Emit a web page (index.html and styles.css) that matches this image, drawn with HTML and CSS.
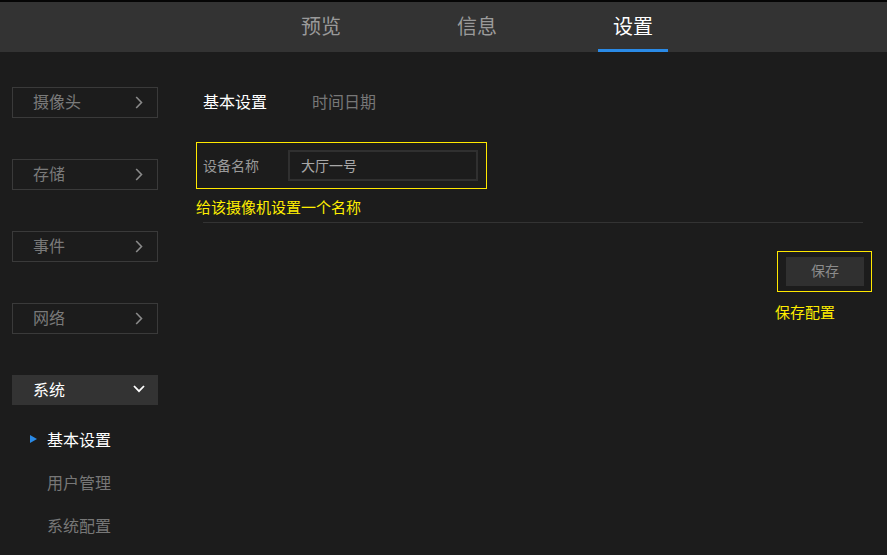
FILE: index.html
```html
<!DOCTYPE html>
<html lang="zh-CN">
<head>
<meta charset="utf-8">
<title>设置</title>
<link rel="stylesheet" href="styles.css">
</head>
<body>
<header class="topbar">
  <nav class="top-tabs">
    <div class="top-tab">预览</div>
    <div class="top-tab">信息</div>
    <div class="top-tab active">设置</div>
  </nav>
</header>
<div class="layout">
  <aside class="sidebar">
    <div class="menu-item">
      <span>摄像头</span>
      <svg class="chev" width="8" height="13" viewBox="0 0 8 13"><path d="M1.2 1 L6.5 6.5 L1.2 12" fill="none" stroke="#8a8a8a" stroke-width="1.6"/></svg>
    </div>
    <div class="menu-item">
      <span>存储</span>
      <svg class="chev" width="8" height="13" viewBox="0 0 8 13"><path d="M1.2 1 L6.5 6.5 L1.2 12" fill="none" stroke="#8a8a8a" stroke-width="1.6"/></svg>
    </div>
    <div class="menu-item">
      <span>事件</span>
      <svg class="chev" width="8" height="13" viewBox="0 0 8 13"><path d="M1.2 1 L6.5 6.5 L1.2 12" fill="none" stroke="#8a8a8a" stroke-width="1.6"/></svg>
    </div>
    <div class="menu-item">
      <span>网络</span>
      <svg class="chev" width="8" height="13" viewBox="0 0 8 13"><path d="M1.2 1 L6.5 6.5 L1.2 12" fill="none" stroke="#8a8a8a" stroke-width="1.6"/></svg>
    </div>
    <div class="menu-item open">
      <span>系统</span>
      <svg class="chev-down" width="12" height="8" viewBox="0 0 12 8"><path d="M1 1 L6 6.2 L11 1" fill="none" stroke="#ffffff" stroke-width="1.8"/></svg>
    </div>
    <ul class="submenu">
      <li class="sub active"><span class="tri"></span>基本设置</li>
      <li class="sub">用户管理</li>
      <li class="sub">系统配置</li>
    </ul>
  </aside>
  <main class="content">
    <div class="sub-tabs">
      <div class="sub-tab active">基本设置</div>
      <div class="sub-tab">时间日期</div>
    </div>
    <div class="field-box">
      <label class="field-label">设备名称</label>
      <div class="field-input">大厅一号</div>
    </div>
    <div class="hint">给该摄像机设置一个名称</div>
    <div class="divider"></div>
    <div class="save-group">
      <div class="save-box">
        <button class="save-btn">保存</button>
      </div>
      <div class="save-hint">保存配置</div>
    </div>
  </main>
</div>
</body>
</html>
```
FILE: styles.css
```css
* { box-sizing: border-box; }
html, body {
  margin: 0;
  padding: 0;
  background: #1c1c1c;
  font-family: "Noto Sans CJK SC", "Noto Sans", sans-serif;
  height: 100%;
  overflow: hidden;
}
.topbar {
  border-top: 2px solid #050505;
  height: 52px;
  background: #333333;
}
.top-tabs {
  display: flex;
  gap: 86px;
  padding-left: 286px;
  height: 50px;
}
.top-tab {
  width: 70px;
  text-align: center;
  font-size: 20px;
  line-height: 47px;
  color: #9a9a9a;
  border-bottom: 3px solid transparent;
  height: 50px;
}
.top-tab.active {
  color: #ffffff;
  border-bottom-color: #2a8ae6;
}
.layout {
  display: flex;
}
.sidebar {
  width: 196px;
  padding: 35px 0 0 12px;
  flex-shrink: 0;
}
.menu-item {
  width: 146px;
  height: 31px;
  border: 1px solid #3a3a3a;
  display: flex;
  align-items: center;
  justify-content: space-between;
  padding: 0 14px 3px 20px;
  font-size: 16px;
  color: #7a7a7a;
  margin-bottom: 41px;
}
.menu-item .chev { margin-top: 2px; }
.menu-item.open {
  background: #333333;
  border-color: #333333;
  color: #ffffff;
  margin-top: 1px;
  margin-bottom: 0;
  height: 30px;
  padding-right: 12px;
}
.submenu {
  list-style: none;
  margin: 0;
  padding: 0;
}
.sub {
  position: relative;
  padding-left: 35px;
  font-size: 16px;
  line-height: 43px;
  color: #777777;
}
.sub:first-child { margin-top: 13px; }
.sub.active { color: #ffffff; }
.tri {
  position: absolute;
  left: 18px;
  top: 17px;
  width: 0;
  height: 0;
  border-top: 4px solid transparent;
  border-bottom: 4px solid transparent;
  border-left: 7px solid #2a8ae6;
}
.content {
  flex: 1;
  display: flex;
  flex-direction: column;
  padding-right: 15px;
}
.sub-tabs {
  display: flex;
  gap: 45px;
  margin-top: 37px;
  padding-left: 7px;
}
.sub-tab {
  font-size: 16px;
  line-height: 24px;
  color: #777777;
}
.sub-tab.active { color: #ffffff; }
.field-box {
  margin-top: 29px;
  width: 291px;
  height: 47px;
  border: 1px solid #ffe800;
  display: flex;
  align-items: center;
  padding: 0 8px 0 6px;
  justify-content: space-between;
}
.field-label {
  font-size: 14px;
  color: #9a9a9a;
  margin-bottom: 2px;
}
.field-input {
  width: 190px;
  height: 31px;
  border: 2px solid #303030;
  background: #1c1c1c;
  font-size: 14px;
  line-height: 26px;
  color: #a8a8a8;
  padding-left: 11px;
}
.hint {
  margin-top: 8px;
  font-size: 15px;
  line-height: 20px;
  color: #ffee00;
}
.divider {
  margin: 5px 9px 0 7px;
  height: 1px;
  background: #333333;
}
.save-group {
  align-self: flex-end;
  margin-top: 28px;
  display: flex;
  flex-direction: column;
}
.save-box {
  width: 95px;
  height: 41px;
  border: 1px solid #ffe800;
  padding: 5px 7px 0 8px;
}
.save-btn {
  display: block;
  width: 78px;
  height: 29px;
  border: none;
  background: #303030;
  color: #8c8c8c;
  font-family: "Noto Sans CJK SC", "Noto Sans", sans-serif;
  font-size: 14px;
  line-height: 27px;
  padding: 0 0 2px 0;
}
.save-hint {
  margin-top: 10px;
  margin-left: -2px;
  font-size: 15px;
  line-height: 20px;
  color: #ffee00;
}
```
